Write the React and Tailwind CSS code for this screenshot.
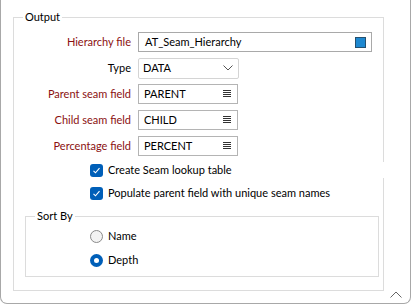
import React from 'react';

const font = { fontFamily: 'Lato, "Noto Sans", "Liberation Sans", sans-serif' };

const ListIcon = () => (
  <svg width="8" height="8" viewBox="0 0 8 8" className="text-[#333]">
    <path d="M0 0.5h8M0 2.5h8M0 4.5h8M0 6.5h8" stroke="currentColor" strokeWidth="1" />
  </svg>
);

const FieldRow = ({ label, red, children }) => (
  <div className="flex items-center h-[20px]">
    <div className={`w-[118px] text-right pr-[1px] ${red ? 'text-[#8b1010]' : 'text-black'}`}>{label}</div>
    <div className="ml-[6px]">{children}</div>
  </div>
);

const TextBox = ({ value, wide }) => (
  <div
    className={`h-[20px] flex items-center justify-between border bg-white ${
      wide ? 'w-[234px] border-[#a9a9a9] pl-[6px] pr-[5px]' : 'w-[100px] border-[#b4b4b4] pl-[5px] pr-[6px]'
    }`}
  >
    <span>{value}</span>
    {wide ? (
      <span className="w-[11px] h-[11px] bg-[#1e88d0] border border-[#25506f]" />
    ) : (
      <ListIcon />
    )}
  </div>
);

const Check = ({ label, cover }) => (
  <div className={`flex items-center h-[16px] pl-[76px] ${cover ? 'bg-white -mr-[10px]' : ''}`}>
    <span className="w-[13px] h-[13px] rounded-[3px] bg-[#005fb8] flex items-center justify-center">
      <svg width="9" height="9" viewBox="0 0 9 9">
        <path d="M1.5 4.8l2 2 4-4.6" fill="none" stroke="white" strokeWidth="1.1" />
      </svg>
    </span>
    <span className="ml-[5px]">{label}</span>
  </div>
);

const Radio = ({ label, checked }) => (
  <div className="flex items-center h-[16px] pl-[64px]">
    {checked ? (
      <span className="w-[13px] h-[13px] rounded-full bg-[#005fb8] flex items-center justify-center">
        <span className="w-[5px] h-[5px] rounded-full bg-white" />
      </span>
    ) : (
      <span className="w-[13px] h-[13px] rounded-full border border-[#8a8a8a] bg-[#f3f3f3]" />
    )}
    <span className="ml-[5px]">{label}</span>
  </div>
);

export default function App() {
  return (
    <div className="w-[412px] h-[305px] bg-white text-[11px] leading-[16px] text-black relative overflow-hidden" style={font}>
      <div className="w-[411px] h-[304px] border-x border-b border-[#a8a8a8] rounded-b-[7px] pt-[17px] pl-[12px]">
        {/* Output group */}
        <div className="relative w-[371px] h-[274px] border border-[#dcdcdc]">
          <div className="absolute -top-[9px] left-[9px] bg-white px-[2px]">Output</div>

          <div className="pt-[14px] flex flex-col gap-[6px]">
            <FieldRow label="Hierarchy file" red>
              <TextBox value="AT_Seam_Hierarchy" wide />
            </FieldRow>
            <FieldRow label="Type">
              <div className="w-[101px] h-[21px] border border-[#d4d4d4] rounded-[2px] flex items-center justify-between pl-[4px] pr-[5px] bg-white">
                <span>DATA</span>
                <svg width="10" height="6" viewBox="0 0 10 6">
                  <path d="M0.5 0.5l4.5 4.5 4.5-4.5" fill="none" stroke="#555" strokeWidth="1" />
                </svg>
              </div>
            </FieldRow>
            <FieldRow label="Parent seam field" red>
              <TextBox value="PARENT" />
            </FieldRow>
            <FieldRow label="Child seam field" red>
              <TextBox value="CHILD" />
            </FieldRow>
            <FieldRow label="Percentage field" red>
              <TextBox value="PERCENT" />
            </FieldRow>
          </div>

          <div className="mt-[6px] flex flex-col gap-[7px]">
            <Check label="Create Seam lookup table" cover />
            <Check label="Populate parent field with unique seam names" />
          </div>

          {/* Sort By group */}
          <div className="relative ml-[11px] mt-[15px] w-[354px] h-[61px] border border-[#dcdcdc] pt-[11px] flex flex-col gap-[8px]">
            <div className="absolute -top-[9px] left-[9px] bg-white px-[2px]">Sort By</div>
            <Radio label="Name" />
            <Radio label="Depth" checked />
          </div>
        </div>
      </div>

      <svg className="absolute left-[390px] top-[291px]" width="12" height="7" viewBox="0 0 12 7">
        <path d="M0.5 6.5l5.5-5.5 5.5 5.5" fill="none" stroke="#666" strokeWidth="1" />
      </svg>
    </div>
  );
}
